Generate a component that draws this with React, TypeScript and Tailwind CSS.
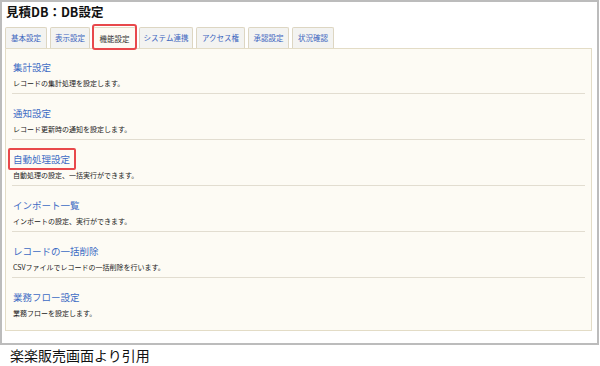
const tabs = [
  { label: '基本設定', w: 'w-[42px]' },
  { label: '表示設定', w: 'w-[40px]' },
  { label: '機能設定', w: 'w-[43px]', active: true },
  { label: 'システム連携', w: 'w-[54px]' },
  { label: 'アクセス権', w: 'w-[49px]' },
  { label: '承認設定', w: 'w-[41px]' },
  { label: '状況確認', w: 'w-[42px]' },
];

const sections = [
  { title: '集計設定', desc: 'レコードの集計処理を設定します。' },
  { title: '通知設定', desc: 'レコード更新時の通知を設定します。' },
  { title: '自動処理設定', desc: '自動処理の設定、一括実行ができます。', marked: true },
  { title: 'インポート一覧', desc: 'インポートの設定、実行ができます。' },
  { title: 'レコードの一括削除', desc: 'CSVファイルでレコードの一括削除を行います。' },
  { title: '業務フロー設定', desc: '業務フローを設定します。' },
];

export default function App() {
  return (
    <div
      className="w-[600px] h-[366px] bg-white overflow-hidden"
      style={{ fontFamily: '"Noto Sans CJK JP", "Noto Sans", sans-serif' }}
    >
      <div className="w-[599px] h-[345px] border-2 border-[#bcbcbc] px-[3px]">
        <h1 className="text-[12.5px] font-bold leading-[16px] text-[#111] pt-[2px] pl-[1px]">見積DB：DB設定</h1>

        {/* tabs */}
        <div className="flex gap-[3px] mt-[7px] h-[21px] items-end">
          {tabs.map(t => (
            <div
              key={t.label}
              className={`relative ${t.w} h-[21px] flex items-center justify-center text-[7.5px] leading-none border border-b-0 rounded-t-[2px] ${
                t.active
                  ? 'bg-[#fdfbf4] border-[#e3dcc6] text-[#333] z-10 h-[22px] -mb-[1px]'
                  : 'bg-[#f3f3f1] border-[#ddd6c2] text-[#3d66bf]'
              }`}
            >
              {t.label}
              {t.active && (
                <span className="absolute -top-[4px] -left-[2px] -right-[2px] -bottom-[1px] border-2 border-[#e8484b] rounded-[3px]" />
              )}
            </div>
          ))}
        </div>

        {/* panel */}
        <div className="w-[587px] h-[283px] bg-[#fdfbf4] border border-[#e3dcc6]">
          {sections.map((s, i) => (
            <div
              key={s.title}
              className={`ml-[6px] mr-[6px] pl-[1px] pb-[5px] ${i === 0 ? 'pt-[11px]' : 'pt-[12px]'} ${
                i < sections.length - 1 ? 'border-b border-[#e2ddd0]' : ''
              }`}
            >
              <div className="h-[14px] flex items-center">
                <span className="relative text-[9.5px] leading-[14px] text-[#3d6cc4]">
                  {s.title}
                  {s.marked && (
                    <span className="absolute -top-[4px] -left-[5px] -right-[6px] -bottom-[4px] border-2 border-[#e8484b] rounded-[2px]" />
                  )}
                </span>
              </div>
              <div className="mt-[4px] h-[10px] text-[7px] leading-[10px] text-[#222]">{s.desc}</div>
            </div>
          ))}
        </div>
      </div>
      <div className="pl-[10px] text-[14px] leading-[18px] text-[#111] mt-[1px]">楽楽販売画面より引用</div>
    </div>
  );
}
